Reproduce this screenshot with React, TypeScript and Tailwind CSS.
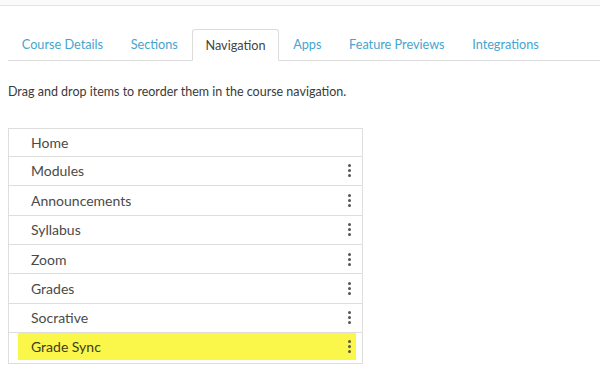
const tabs = ['Course Details', 'Sections', 'Navigation', 'Apps', 'Feature Previews', 'Integrations'];

const items = ['Home', 'Modules', 'Announcements', 'Syllabus', 'Zoom', 'Grades', 'Socrative'];

function Kebab() {
  return (
    <div className="flex flex-col items-center gap-[2px]">
      <span className="block w-[3px] h-[3px] rounded-full bg-[#555]" />
      <span className="block w-[3px] h-[3px] rounded-full bg-[#555]" />
      <span className="block w-[3px] h-[3px] rounded-full bg-[#555]" />
    </div>
  );
}

export default function App() {
  return (
    <div
      className="w-[600px] h-[378px] bg-white overflow-hidden"
      style={{ fontFamily: 'Lato, "Open Sans", sans-serif' }}
    >
      <div className="h-[6px] bg-[#fafafa] border-b border-[#e4e4e4]" />

      <div className="mt-[23px] ml-[8px] flex items-end border-b border-[#dcdcdc] h-[32px]">
        {tabs.map((t) =>
          t === 'Navigation' ? (
            <div
              key={t}
              className="h-[32px] -mb-px px-[12.8px] pt-[2px] flex items-center bg-white border border-b-white border-[#dcdcdc] rounded-t-[3px] text-[12.7px] text-[#444]"
            >
              {t}
            </div>
          ) : (
            <div key={t} className="h-[32px] px-[13.8px] pt-[2px] flex items-center text-[12.7px] text-[#45a5d0]">
              {t}
            </div>
          )
        )}
      </div>

      <p className="mt-[22px] ml-[8px] text-[12.5px] text-[#3a3a3a]">
        Drag and drop items to reorder them in the course navigation.
      </p>

      <div className="mt-[26px] ml-[8px] w-[355px] border border-[#dedede]">
        {items.map((it, i) => (
          <div
            key={it}
            className={`${i === 0 ? 'h-[28px]' : 'h-[29.4px]'} flex items-center justify-between pl-[22px] pr-[11px] border-b border-[#dedede] text-[14px] text-[#4a4a4a]`}
          >
            <span>{it}</span>
            {i > 0 && <Kebab />}
          </div>
        ))}
        <div className="h-[30px] pl-[9px] pr-[6px] pb-[3px]">
          <div className="h-full bg-[#fbf64a] flex items-center justify-between pl-[13px] pr-[5px] text-[14px] text-[#3d3d1e]">
            <span>Grade Sync</span>
            <Kebab />
          </div>
        </div>
      </div>
    </div>
  );
}
